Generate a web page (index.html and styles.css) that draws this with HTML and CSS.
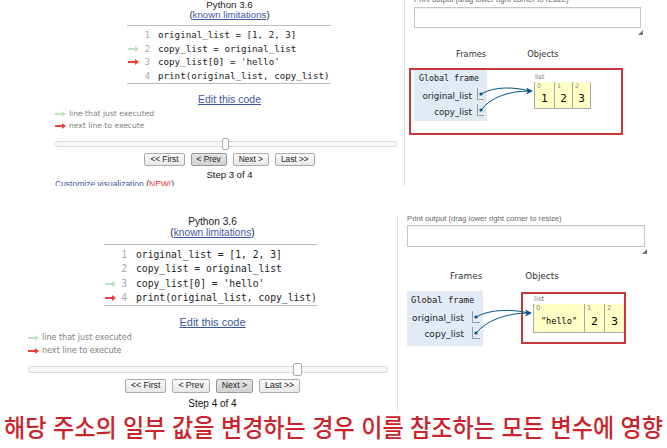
FILE: index.html
```html
<!DOCTYPE html>
<html lang="ko">
<head>
<meta charset="utf-8">
<link rel="stylesheet" href="styles.css">
</head>
<body>
<section class="panel p1">
  <div class="left">
    <div class="lang">Python 3.6<br>(<a href="#">known limitations</a>)</div>
    <div class="code">
      <div class="row"><span class="arr"></span><span class="num">1</span><span class="txt">original_list = [1, 2, 3]</span></div>
      <div class="row"><span class="arr"><svg width="11" height="6" viewBox="0 0 11 6"><path d="M0 2h7V0l4 3-4 3V4H0z" fill="#bfe3c0"/></svg></span><span class="num">2</span><span class="txt">copy_list = original_list</span></div>
      <div class="row"><span class="arr"><svg width="11" height="6" viewBox="0 0 11 6"><path d="M0 2h7V0l4 3-4 3V4H0z" fill="#e8423a"/></svg></span><span class="num">3</span><span class="txt">copy_list[0] = 'hello'</span></div>
      <div class="row"><span class="arr"></span><span class="num">4</span><span class="txt">print(original_list, copy_list)</span></div>
    </div>
    <div class="edit"><a href="#">Edit this code</a></div>
    <div class="legend">
      <div class="lrow"><svg width="11" height="6" viewBox="0 0 11 6"><path d="M0 2h7V0l4 3-4 3V4H0z" fill="#bfe3c0"/></svg><span>line that just executed</span></div>
      <div class="lrow"><svg width="11" height="6" viewBox="0 0 11 6"><path d="M0 2h7V0l4 3-4 3V4H0z" fill="#e8423a"/></svg><span>next line to execute</span></div>
    </div>
    <div class="slider"><span class="thumb"></span></div>
    <div class="buttons">
      <button class="btn">&lt;&lt; First</button>
      <button class="btn on">&lt; Prev</button>
      <button class="btn">Next &gt;</button>
      <button class="btn">Last &gt;&gt;</button>
    </div>
    <div class="step">Step 3 of 4</div>
    <div class="custom"><a href="#">Customize visualization</a> (<span class="new">NEW!</span>)</div>
  </div>
  <div class="right">
    <div class="plabel">Print output (drag lower right corner to resize)</div>
    <div class="pbox"></div>
    <div class="grip"><svg width="5" height="5" viewBox="0 0 5 5"><path d="M5 0V5H0z" fill="#777"/></svg></div>
    <div class="vhead"><span class="fr">Frames</span><span class="ob">Objects</span></div>
    <div class="redbox">
      <div class="frame">
        <div class="gf">Global frame</div>
        <div class="var"><span class="vn">original_list</span><span class="vv"></span></div>
        <div class="var"><span class="vn">copy_list</span><span class="vv"></span></div>
      </div>
      <div class="obj">
        <div class="ltype">list</div>
        <div class="cells">
          <div class="cell w20"><span class="idx">0</span><span class="val">1</span></div>
          <div class="cell w18"><span class="idx">1</span><span class="val">2</span></div>
          <div class="cell w19 last"><span class="idx">2</span><span class="val">3</span></div>
        </div>
      </div>
      <svg class="links" width="214" height="67" viewBox="0 0 214 67">
        <g fill="none" stroke="#005583" stroke-width="1">
          <path d="M72 26C86 18 106 19 121 23"/>
          <path d="M72 42C82 29 100 23 121 23"/>
        </g>
        <g fill="#005583">
          <circle cx="72" cy="26" r="1.6"/>
          <circle cx="72" cy="42" r="1.6"/>
          <path d="M124 23L117 19.5L119 23L117 26.5z"/>
        </g>
      </svg>
    </div>
  </div>
</section>

<section class="panel p2">
  <div class="left">
    <div class="lang">Python 3.6<br>(<a href="#">known limitations</a>)</div>
    <div class="code">
      <div class="row"><span class="arr"></span><span class="num">1</span><span class="txt">original_list = [1, 2, 3]</span></div>
      <div class="row"><span class="arr"></span><span class="num">2</span><span class="txt">copy_list = original_list</span></div>
      <div class="row"><span class="arr"><svg width="11" height="6" viewBox="0 0 11 6"><path d="M0 2h7V0l4 3-4 3V4H0z" fill="#bfe3c0"/></svg></span><span class="num">3</span><span class="txt">copy_list[0] = 'hello'</span></div>
      <div class="row"><span class="arr"><svg width="11" height="6" viewBox="0 0 11 6"><path d="M0 2h7V0l4 3-4 3V4H0z" fill="#e8423a"/></svg></span><span class="num">4</span><span class="txt">print(original_list, copy_list)</span></div>
    </div>
    <div class="edit"><a href="#">Edit this code</a></div>
    <div class="legend">
      <div class="lrow"><svg width="11" height="6" viewBox="0 0 11 6"><path d="M0 2h7V0l4 3-4 3V4H0z" fill="#bfe3c0"/></svg><span>line that just executed</span></div>
      <div class="lrow"><svg width="11" height="6" viewBox="0 0 11 6"><path d="M0 2h7V0l4 3-4 3V4H0z" fill="#e8423a"/></svg><span>next line to execute</span></div>
    </div>
    <div class="slider"><span class="thumb"></span></div>
    <div class="buttons">
      <button class="btn">&lt;&lt; First</button>
      <button class="btn">&lt; Prev</button>
      <button class="btn on">Next &gt;</button>
      <button class="btn">Last &gt;&gt;</button>
    </div>
    <div class="step">Step 4 of 4</div>
  </div>
  <div class="right">
    <div class="plabel">Print output (drag lower right corner to resize)</div>
    <div class="pbox"></div>
    <div class="grip"><svg width="5" height="5" viewBox="0 0 5 5"><path d="M5 0V5H0z" fill="#777"/></svg></div>
    <div class="vhead"><span class="fr">Frames</span><span class="ob">Objects</span></div>
    <div class="viz">
      <div class="frame">
        <div class="gf">Global frame</div>
        <div class="var"><span class="vn">original_list</span><span class="vv"></span></div>
        <div class="var"><span class="vn">copy_list</span><span class="vv"></span></div>
      </div>
      <div class="redbox">
        <div class="ltype">list</div>
        <div class="cells">
          <div class="cell w51"><span class="idx">0</span><span class="val mono">"hello"</span></div>
          <div class="cell w20"><span class="idx">1</span><span class="val">2</span></div>
          <div class="cell w20"><span class="idx">2</span><span class="val">3</span></div>
        </div>
      </div>
      <svg class="links" width="130" height="60" viewBox="0 0 130 60">
        <g fill="none" stroke="#005583" stroke-width="1">
          <path d="M69 26C83 18 105 18 122 22"/>
          <path d="M69 42C80 29 100 22 122 22"/>
        </g>
        <g fill="#005583">
          <circle cx="69" cy="26" r="1.6"/>
          <circle cx="69" cy="42" r="1.6"/>
          <path d="M125 22L118 18.5L120 22L118 25.5z"/>
        </g>
      </svg>
    </div>
  </div>
</section>

<p class="caption"><span>해당 주소의 일부 값을 변경하는 경우 이를 참조하는 모든 변수에 영향</span></p>
</body>
</html>
```

FILE: styles.css
```css
* { box-sizing: border-box; margin: 0; padding: 0; }
html, body { background: #fff; }
body {
  width: 667px;
  height: 448px;
  overflow: hidden;
  font-family: "Liberation Sans", Arial, sans-serif;
  color: #111;
}
a { color: #3d58a2; text-decoration: underline; }

.panel { display: flex; overflow: hidden; }
.p1 { height: 186px; }
.p2 { height: 194px; margin-top: 30px; }

.left { border-right: 1px solid #dedede; flex: none; }
.p1 .left { width: 405px; padding-left: 55px; }
.p2 .left { width: 398px; padding-left: 28px; }

.lang { text-align: center; color: #222; }
.p1 .lang { font-size: 9.7px; line-height: 9.5px; }
.p2 .lang { font-size: 10.2px; line-height: 11px; }

.code {
  border-top: 1px solid #bbb;
  border-bottom: 1px solid #bbb;
  font-family: "DejaVu Sans Mono", monospace;
  color: #222;
}
.p1 .code { width: 204px; margin: 6px 0 0 72px; padding-top: 2px; font-size: 9.2px; line-height: 13.7px; }
.p2 .code { width: 214px; margin: 6px 0 0 76px; padding-top: 3px; font-size: 9.7px; line-height: 14.3px; }
.row { display: flex; align-items: center; }
.arr { width: 13px; display: flex; align-items: center; padding-left: 1px; }
.num { width: 10px; text-align: right; color: #aaa; }
.txt { white-space: pre; }
.p1 .txt { margin-left: 8px; }
.p2 .txt { margin-left: 9px; }

.edit { text-align: center; }
.p1 .edit { font-size: 10.5px; line-height: 12px; margin-top: 9px; }
.p2 .edit { font-size: 11px; line-height: 13px; margin-top: 10px; }

.legend { font-family: "DejaVu Sans", sans-serif; color: #808080; }
.p1 .legend { font-size: 7.6px; line-height: 12px; margin-top: 3px; }
.p2 .legend { font-size: 8px; line-height: 12.5px; margin-top: 3px; }
.lrow { display: flex; align-items: center; gap: 3px; }

.slider {
  position: relative;
  border: 1px solid #dcdcdc;
  border-radius: 3px;
  background: #f7f7f7;
  margin-top: 9px;
}
.p1 .slider { width: 343px; height: 6px; }
.p2 .slider { width: 360px; height: 7px; }
.thumb {
  position: absolute;
  top: -4px;
  background: #fff;
  border: 1px solid #aaa;
  border-radius: 2px;
}
.p1 .thumb { left: 166px; width: 7px; height: 12px; }
.p2 .thumb { left: 264px; width: 9px; height: 13px; }

.buttons { display: flex; justify-content: center; gap: 6px; margin-top: 6px; }
.btn {
  font-family: "Liberation Sans", Arial, sans-serif;
  color: #222;
  background: linear-gradient(#fafafa, #e8e8e8);
  border: 1px solid #aaa;
  border-radius: 2px;
  padding: 0 5px;
}
.btn.on { background: linear-gradient(#e4e4e4, #d2d2d2); border-color: #999; }
.p1 .btn { font-size: 8.3px; line-height: 11px; height: 13px; }
.p2 .btn { font-size: 8.7px; line-height: 11.5px; height: 13.5px; }

.step { text-align: center; color: #111; }
.p1 .step { font-size: 9.5px; line-height: 11px; margin-top: 3px; }
.p2 .step { font-size: 10px; line-height: 11px; margin-top: 5px; }

.custom { font-size: 8.5px; line-height: 10px; margin-top: -1px; color: #333; }
.new { color: #e33; }

.right { flex: 1; padding-left: 9px; }
.plabel { font-size: 7.7px; line-height: 10px; color: #666; white-space: nowrap; }
.p1 .plabel { margin-top: -5px; }
.p2 .plabel { margin-top: -2px; }
.pbox { border: 1px solid #c6c6c6; background: #fff; box-shadow: inset 0 1px 1px #eee; }
.p1 .pbox { width: 227px; height: 21px; margin-top: 2px; }
.p2 .pbox { width: 238px; height: 22px; margin-top: 1px; }
.grip { height: 7px; display: flex; justify-content: flex-end; align-items: flex-end; }
.p1 .grip { width: 229px; }
.p2 .grip { width: 240px; }

.vhead { display: flex; font-family: "DejaVu Sans", sans-serif; color: #333; line-height: 12px; }
.p1 .vhead { font-size: 8.3px; margin-top: 13px; }
.p1 .fr { margin-left: 42px; }
.p1 .ob { margin-left: 41px; }
.p2 .vhead { font-size: 8.9px; margin-top: 16px; }
.p2 .fr { margin-left: 43px; }
.p2 .ob { margin-left: 43px; }

.redbox { border: 2px solid #c9393b; position: relative; }
.p1 .redbox { display: flex; width: 214px; height: 67px; margin: 8px 0 0 -5px; padding-left: 3px; }

.frame { background: #e2eaf5; flex: none; }
.p1 .frame { width: 73px; height: 51px; }
.p2 .frame { width: 76px; height: 55px; }
.gf { font-family: "DejaVu Sans Mono", monospace; color: #222; line-height: 12px; }
.p1 .gf { font-size: 8.3px; padding: 2px 0 0 5px; }
.p2 .gf { font-size: 8.75px; padding: 3px 0 0 4px; }
.var { display: flex; height: 16px; font-family: "DejaVu Sans", sans-serif; color: #222; }
.p1 .var { font-size: 8.7px; }
.p2 .var { font-size: 9.1px; }
.gf + .var { margin-top: 4px; }
.vn { text-align: right; line-height: 16px; }
.p1 .vn { width: 63px; padding-right: 5px; }
.p2 .vn { width: 65px; padding-right: 8px; }
.vv { border-left: 1px solid #999; border-bottom: 1px solid #999; height: 12px; }
.p1 .vv { width: 7px; }
.p2 .vv { width: 8px; margin-top: 1px; }

.obj { margin: 4px 0 0 47px; }
.ltype { font-family: "DejaVu Sans", sans-serif; color: #777; line-height: 6px; }
.p1 .ltype { font-size: 6.5px; margin-left: 1px; }
.p2 .ltype { font-size: 7px; margin-left: 1px; }
.cells { display: flex; margin-top: 2px; }
.cell {
  display: flex;
  flex-direction: column;
  background: #ffffc6;
  border-left: 1px solid #a8a8a8;
  border-bottom: 1px solid #a8a8a8;
  font-family: "DejaVu Sans", sans-serif;
}
.cell.last { border-right: 1px solid #a8a8a8; }
.w18 { width: 18px; } .w19 { width: 19px; } .w20 { width: 20px; } .w51 { width: 51px; }
.p1 .cell { height: 27px; }
.p2 .cell { height: 29px; }
.idx { color: #888; line-height: 8px; padding-left: 2px; }
.p1 .idx { font-size: 6.3px; }
.p2 .idx { font-size: 6.8px; }
.val { text-align: center; color: #000; }
.p1 .val { font-size: 10.5px; line-height: 16px; }
.p2 .val { font-size: 11px; line-height: 17px; margin-top: 1px; }
.val.mono { font-family: "DejaVu Sans Mono", monospace; font-size: 8.6px; }

.viz { display: flex; position: relative; margin-top: 9px; }
.p2 .redbox { width: 105px; height: 52px; margin: 1px 0 0 38px; padding: 2px 0 0 10px; overflow: hidden; }
.p2 .cells { width: 91px; }

.links { position: absolute; left: -2px; top: -2px; pointer-events: none; }
.viz .links { left: 0; top: 0; }

.caption {
  margin-top: 1px;
  width: 667px;
  overflow: hidden;
  font-family: "Noto Sans CJK KR", sans-serif;
  font-size: 25px;
  line-height: 30px;
  font-weight: 500;
  color: #c9242b;
  white-space: nowrap;
  padding-left: 4px;
}
.caption span { display: inline-block; transform: scaleX(0.923); transform-origin: left center; }
```
